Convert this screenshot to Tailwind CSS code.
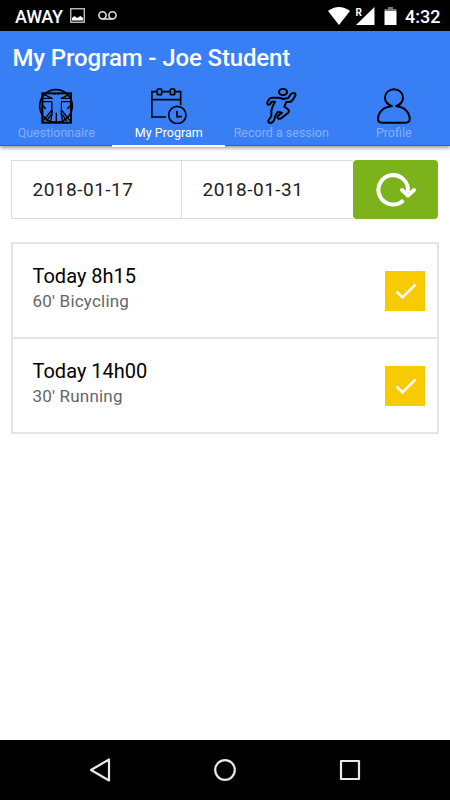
<!DOCTYPE html>
<html lang="en">
<head>
  <meta charset="UTF-8" />
  <title>My Program</title>
  <script src="https://cdn.jsdelivr.net/npm/@tailwindcss/browser@4"></script>
</head>
<body class="bg-white font-[Roboto,sans-serif]">
  <div class="h-[800px] w-[450px] flex flex-col overflow-hidden">

    <!-- Status bar -->
    <div class="h-[31px] shrink-0 bg-black text-white flex items-center justify-between pl-[15px] pr-[10px]">
      <div class="flex items-center">
        <span class="w-[47px] text-[18px] font-medium leading-none whitespace-nowrap tracking-[-0.3px] pt-[3px]">AWAY</span>
        <svg class="ml-2 w-[15px] h-[15px]" viewBox="0 0 15 15" fill="none">
          <rect x=".75" y=".75" width="13.5" height="13.5" stroke="#ccc" stroke-width="1.3" />
          <path d="M2 12.5V10l2.5-2L7 10l3.5-2L13 10v2.500z" fill="#fff" />
        </svg>
        <svg class="ml-[13px] w-[19px] h-[11px]" viewBox="0 0 19 11" fill="none" stroke="#ddd" stroke-width="1.6">
          <circle cx="4.500" cy="5.300" r="3.600" />
          <circle cx="14.500" cy="5.300" r="3.600" />
          <path d="M4.500 9h10" />
        </svg>
      </div>
      <div class="flex items-center">
        <svg class="w-[22px] h-[18px] mt-px" viewBox="0 0 22 18" fill="#fff"><path d="M0 4Q11-4 22 4L11 18z" /></svg>
        <svg class="ml-[5px] w-[20px] h-[18px] mt-px" viewBox="0 0 20 18">
          <path d="M19.500 0v18H1z" fill="#fff" />
          <text x="0.500" y="8.500" font-size="10" font-weight="700" fill="#fff" stroke="#000" stroke-width="2" paint-order="stroke">R</text>
        </svg>
        <svg class="ml-[9px] w-[13px] h-[18px]" viewBox="0 0 13 18" fill="#fff">
          <path d="M4 0h5v2h3.500v2H.5V2H4z" fill="#777" />
          <path d="M.5 4h12v14H.5z" />
        </svg>
        <span class="ml-[8px] w-[35px] text-[18px] font-medium leading-none pt-[2px]">4:32</span>
      </div>
    </div>

    <!-- Header and tabs -->
    <header class="relative h-[115px] shrink-0 bg-[#387ef5] border-b border-[#0c6cf0] shadow-[0_2px_4px_rgba(0,0,0,0.4)]">
      <h1 class="h-[54px] pl-[12.500px] text-[24px] font-medium leading-[54px] text-white whitespace-nowrap tracking-[-0.13px]">My Program - Joe Student</h1>
      <nav class="grid grid-cols-4 h-[61px] text-[12.500px] leading-[18px] text-white/40">
        <a class="flex flex-col items-center pt-[3px]">
          <svg class="w-9 h-9" viewBox="114 24 108 108" fill="none" stroke="#000" stroke-width="5">
            <circle cx="168" cy="78" r="49" />
            <rect x="127" y="40" width="86" height="88" stroke-width="6" />
            <path d="M129 65h27v38l-5 24M211 65h-27v38l5 24M169 98v29M129 55h27M211 55h-27" stroke-width="4" />
            <path d="M133 44l25 12M207 44l-25 12M156 90l-28 34M184 90l28 34M154 103l-15 20M186 103l15 20M129 77l8 10M210 77l-8 10" stroke-width="4" />
            <path d="M162 44Q169 38 176 44L175 55 184 61V92H156V61L164 55z" fill="#387ef5" stroke="none" />
            <path d="M162 44Q169 38 176 44M156 65v35M184 65v35" stroke-width="3" />
          </svg>
          <span>Questionnaire</span>
        </a>
        <a class="flex flex-col items-center pt-[3px] text-white">
          <svg class="w-9 h-9 -mr-px" viewBox="117 23 108 108" fill="none" stroke="#000" stroke-width="5">
            <path d="M134 34H119.500V110H162M151 34H173M190 34H206V74M119 58H206" />
            <rect x="136" y="26" width="13" height="17" rx="2" />
            <rect x="175" y="26" width="13" height="17" rx="2" />
            <circle cx="196" cy="104" r="26" />
            <path d="M195 92v17h15" />
          </svg>
          <span>My Program</span>
        </a>
        <a class="flex flex-col items-center pt-[3px]">
          <svg class="w-9 h-9" viewBox="114 24 108 108" fill="none" stroke="#000" stroke-width="6" stroke-linejoin="round">
            <ellipse cx="174" cy="36" rx="12" ry="9.500" />
            <path d="M205 39C213 38 212 45 210 49L203 60Q200 66 191 66H184L178 80L188 87Q195 93 189 99L168 115C161 119 154 114 159 108L171 98 158 96 151 107 147 121Q143 129 135 129Q127 127 131 120L139 109 139 92Q140 86 143 79L150 65H140L137 70Q133 76 128 73Q125 69 128 65L133 57Q136 53 142 53H160Q169 54 175 57L190 54 197 43Q201 39 205 39z" />
          </svg>
          <span class="whitespace-nowrap">Record a session</span>
        </a>
        <a class="flex flex-col items-center pt-[3px]">
          <svg class="w-9 h-9" viewBox="114 24 108 108" fill="none" stroke="#000" stroke-width="6" stroke-linejoin="round">
            <path d="M164 79C149 74 141 66 141 53C141 38 153 28 168 28C183 28 195 38 195 53C195 66 187 74 172 79M160 79C134 81 120 99 120 117Q120 128 132 128H203Q215 128 215 117C215 99 201 81 176 79" />
          </svg>
          <span>Profile</span>
        </a>
      </nav>
      <div class="absolute left-[112px] top-[114px] h-[2px] w-[113px] bg-white"></div>
    </header>

    <main class="flex-1 px-[11px] pt-[14px]">
      <!-- Date range -->
      <div class="flex h-[59px] text-[19px] text-[#222] tracking-[0.5px]">
        <div class="flex w-[171px] items-center border border-[#ddd] pl-[20.500px] pt-px">2018-01-17</div>
        <div class="flex w-[171px] items-center border-y border-[#ddd] pl-[20.500px] pt-px">2018-01-31</div>
        <button class="flex w-[84.500px] items-center justify-center rounded-[4px] bg-[#7cb31a]">
          <svg class="h-[34px] w-[40px] overflow-visible" viewBox="0 0 40 34" fill="none" stroke="#fff" stroke-width="4" stroke-linecap="round" stroke-linejoin="round">
            <path d="M28.400 27.400A14.700 14.700 0 1 1 32.700 19" stroke-linecap="butt" />
            <path d="M27 17l6 5.500 6-5.500" />
          </svg>
        </button>
      </div>

      <!-- Sessions -->
      <div class="mt-[23px] w-[428px] border-2 border-[#e5e5e5]">
        <div class="flex h-[95px] items-center justify-between border-b-2 border-[#e5e5e5] pl-[19.500px] pr-[12px]">
          <div class="pb-[4px]">
            <h2 class="text-[20px] leading-[26px] text-black">Today 8h15</h2>
            <p class="text-[17px] leading-[25px] text-[#666] tracking-[0.2px]">60' Bicycling</p>
          </div>
          <div class="mt-px flex size-10 items-center justify-center bg-[#f8ca00]">
            <svg class="h-[18px] w-[22px]" viewBox="0 0 22 18" fill="none" stroke="#fff" stroke-width="2.500"><path d="M2.500 9.500l6 6L21.500 2.500" /></svg>
          </div>
        </div>
        <div class="flex h-[93px] items-center justify-between pl-[19.500px] pr-[12px]">
          <div class="pb-[4px]">
            <h2 class="text-[20px] leading-[26px] text-black">Today 14h00</h2>
            <p class="text-[17px] leading-[25px] text-[#666] tracking-[0.2px]">30' Running</p>
          </div>
          <div class="mt-px flex size-10 items-center justify-center bg-[#f8ca00]">
            <svg class="h-[18px] w-[22px]" viewBox="0 0 22 18" fill="none" stroke="#fff" stroke-width="2.500"><path d="M2.500 9.500l6 6L21.500 2.500" /></svg>
          </div>
        </div>
      </div>
    </main>

    <!-- Navigation bar -->
    <footer class="flex h-[60px] shrink-0 items-center justify-between bg-black px-[89px]">
      <svg class="h-6 w-[22px]" viewBox="0 0 22 24" fill="none" stroke="#e8e8e8" stroke-width="2.200" stroke-linejoin="round"><path d="M20 1.500v21L2 12z" /></svg>
      <svg class="size-[22px]" viewBox="0 0 22 22" fill="none" stroke="#e8e8e8" stroke-width="2.200"><circle cx="11" cy="11" r="9.800" /></svg>
      <svg class="size-[22px]" viewBox="0 0 22 22" fill="none" stroke="#e8e8e8" stroke-width="2.200" stroke-linejoin="round"><path d="M2 2h18v18H2z" /></svg>
    </footer>
  </div>
</body>
</html>
